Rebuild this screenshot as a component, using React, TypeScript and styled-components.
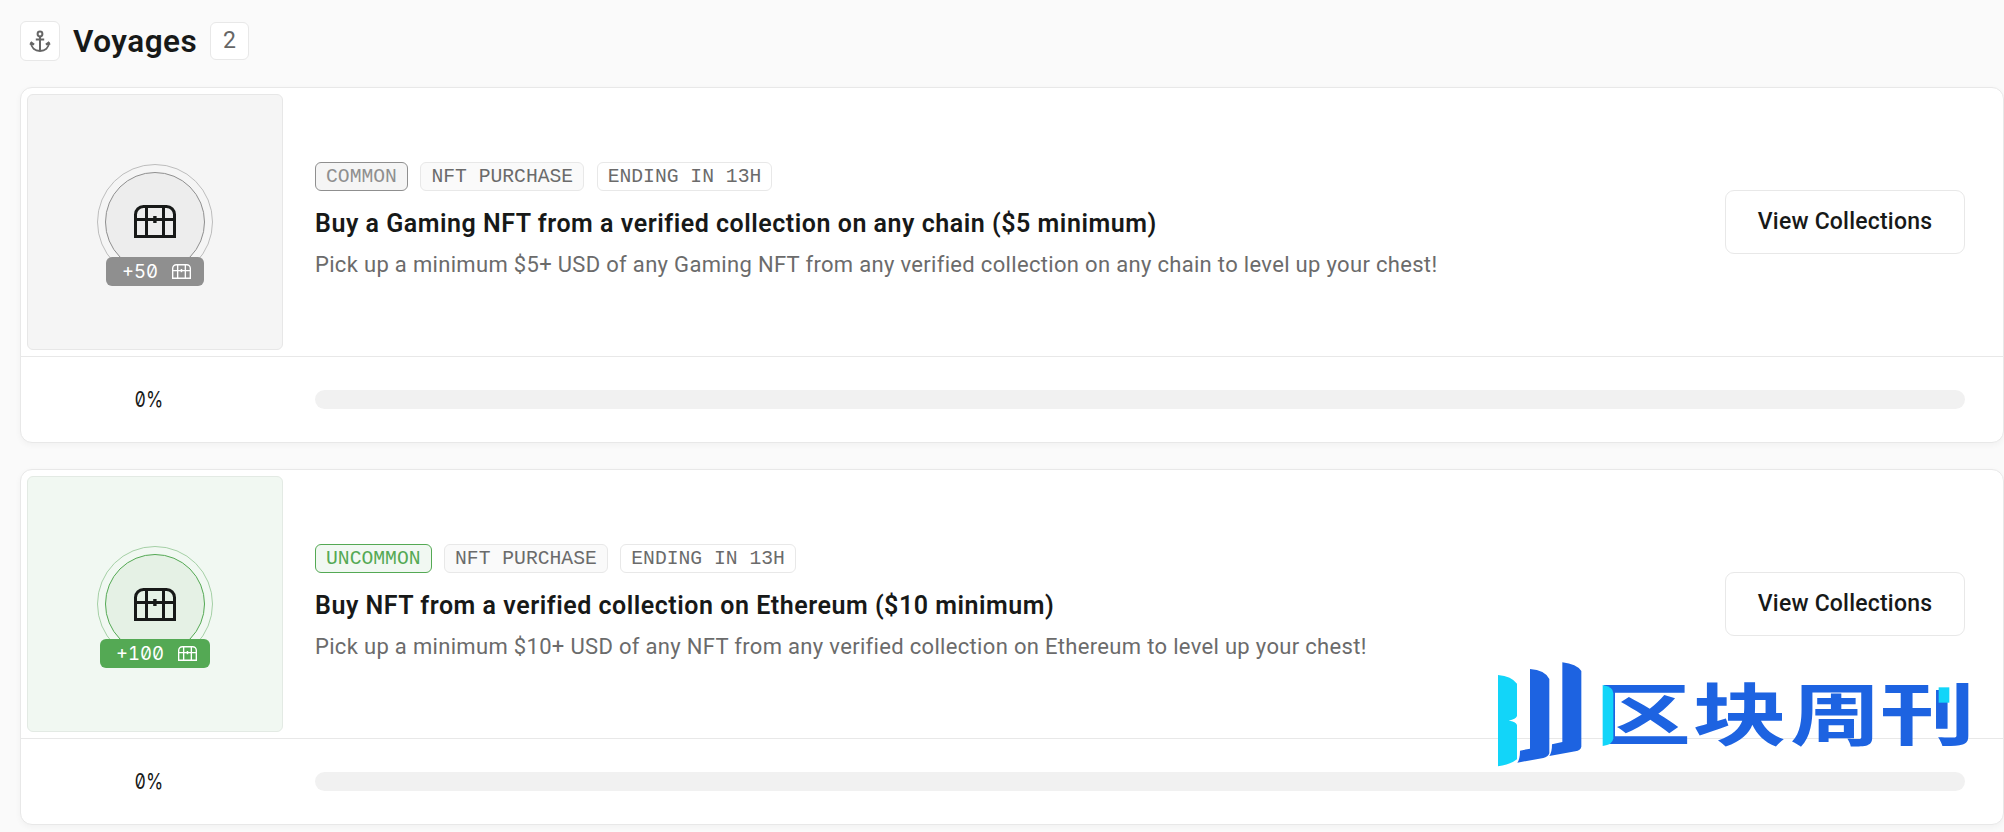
import styled, { createGlobalStyle } from 'styled-components'

type Rarity = 'common' | 'uncommon'

type Voyage = {
  rarity: Rarity
  reward: number
  title: string
  description: string
  progress: number
}

const voyages: Voyage[] = [
  {
    rarity: 'common',
    reward: 50,
    title: 'Buy a Gaming NFT from a verified collection on any chain ($5 minimum)',
    description: 'Pick up a minimum $5+ USD of any Gaming NFT from any verified collection on any chain to level up your chest!',
    progress: 0,
  },
  {
    rarity: 'uncommon',
    reward: 100,
    title: 'Buy NFT from a verified collection on Ethereum ($10 minimum)',
    description: 'Pick up a minimum $10+ USD of any NFT from any verified collection on Ethereum to level up your chest!',
    progress: 0,
  },
]

const colors = {
  common: { main: '#8f8f8f', soft: '#f5f5f5', disc: '#ededed', ring: '#bdbdbd' },
  uncommon: { main: '#54a954', soft: '#f1f8f2', disc: '#e5f1e5', ring: '#a5d0a6' },
}

const GlobalStyle = createGlobalStyle`
  * { box-sizing: border-box; }
  body {
    margin: 0;
    background: #fafafa;
    color: #171918;
    font-family: Roboto, "Liberation Sans", sans-serif;
    overflow: hidden;
  }
`

const Page = styled.main`
  position: relative;
  height: 832px;
  padding: 21px 0 0 20px;
  overflow: hidden;
`

const Header = styled.header`
  display: flex;
  align-items: center;
  height: 40px;
  margin-bottom: 26px;
`

const IconBox = styled.div`
  display: flex;
  align-items: center;
  justify-content: center;
  width: 40px;
  height: 40px;
  background: #fff;
  border: 1px solid #e8e8e8;
  border-radius: 6px;
`

const Heading = styled.h1`
  width: 124px;
  margin: 0 13px 0 13px;
  padding-top: 2px;
  font-size: 31.5px;
  font-weight: 600;
  line-height: 40px;
  letter-spacing: 0.5px;
  white-space: nowrap;
`

const Count = styled.div`
  width: 39px;
  height: 38px;
  background: #fff;
  border: 1px solid #e8e8e8;
  border-radius: 6px;
  color: #666;
  font-size: 23px;
  line-height: 35px;
  text-align: center;
`

const List = styled.div`
  display: flex;
  flex-direction: column;
  gap: 26px;
`

const Card = styled.article`
  height: 356px;
  background: #fff;
  border: 1px solid #e8e8e8;
  border-radius: 12px;
  box-shadow: 0 2px 6px rgba(0, 0, 0, 0.04);
`

const CardTop = styled.div`
  display: flex;
  align-items: center;
  height: 269px;
  padding: 6px 38px 6px 6px;
  border-bottom: 1px solid #e8e8e8;
`

const Cover = styled.div<{ $rarity: Rarity }>`
  display: flex;
  align-items: center;
  justify-content: center;
  flex: none;
  width: 256px;
  height: 256px;
  background: ${(p) => colors[p.$rarity].soft};
  border: 1px solid ${(p) => (p.$rarity === 'common' ? '#e7e7e7' : '#e3eae4')};
  border-radius: 6px;
`

const Ring = styled.div<{ $rarity: Rarity }>`
  position: relative;
  display: flex;
  align-items: center;
  justify-content: center;
  width: 116px;
  height: 116px;
  border: 1px solid ${(p) => colors[p.$rarity].ring};
  border-radius: 50%;
`

const Disc = styled.div<{ $rarity: Rarity }>`
  display: flex;
  align-items: center;
  justify-content: center;
  width: 100px;
  height: 100px;
  padding: ${(p) => (p.$rarity === 'common' ? '0 0 1px' : '1px 0 0')};
  background: ${(p) => colors[p.$rarity].disc};
  border: 1px solid ${(p) => colors[p.$rarity].main};
  border-radius: 50%;
`

const Reward = styled.div<{ $rarity: Rarity }>`
  position: absolute;
  top: 92px;
  left: 50%;
  display: flex;
  align-items: center;
  gap: 14px;
  height: 29px;
  padding: 0 13px 0 16px;
  transform: translateX(-50%);
  background: ${(p) => colors[p.$rarity].main};
  border-radius: 6px;
  color: #fff;
  font-family: Inter, "Liberation Mono", monospace;
  font-feature-settings: 'zero', 'tnum';
  font-size: 18.5px;
  line-height: 29px;
`

const Body = styled.div`
  flex: 1;
  min-width: 0;
  margin-left: 32px;
`

const Tags = styled.div`
  display: flex;
  gap: 12.5px;
  margin-bottom: 15px;
`

const Tag = styled.span<{ $fill?: string; $line?: string; $ink?: string }>`
  height: 29px;
  padding: 1px 10px 0;
  background: ${(p) => p.$fill || '#fff'};
  border: 1px solid ${(p) => p.$line || '#e8e8e8'};
  border-radius: 6px;
  color: ${(p) => p.$ink || '#6b6b6b'};
  font-family: "Liberation Mono", monospace;
  font-size: 19.7px;
  line-height: 27px;
  white-space: pre;
`

const Title = styled.h2`
  margin: 0 0 5px;
  font-size: 25px;
  font-weight: 600;
  line-height: 36px;
  letter-spacing: 0.53px;
  white-space: nowrap;
`

const Description = styled.p`
  margin: 0;
  color: #6b6b6b;
  font-size: 22px;
  line-height: 35px;
  letter-spacing: 0.32px;
  white-space: nowrap;
`

const Button = styled.button`
  width: 240px;
  height: 64px;
  padding: 0 0 1px;
  background: #fff;
  border: 1px solid #e8e8e8;
  border-radius: 9px;
  color: #171918;
  font-family: inherit;
  font-size: 23px;
  font-weight: 500;
  letter-spacing: 0.2px;
`

const ProgressRow = styled.div`
  display: flex;
  align-items: center;
  height: 85px;
  padding: 0 38px 0 6px;
`

const Percent = styled.div`
  width: 244px;
  margin-right: 44px;
  padding-bottom: 2px;
  font-family: Inter, "Liberation Mono", monospace;
  font-feature-settings: 'zero', 'tnum';
  font-size: 22px;
  text-align: center;
`

const Numerals = styled.span`
  display: inline-block;
  transform: scaleX(0.8);
`

const Track = styled.div`
  flex: 1;
  height: 19px;
  background: #f1f1f1;
  border-radius: 10px;
  overflow: hidden;
`

const Bar = styled.div`
  height: 100%;
  background: #54a954;
`

const Brand = styled.svg`
  position: absolute;
  top: 650px;
  left: 1490px;
`

const Anchor = () => (
  <svg width="22" height="23" viewBox="0 0 22 23" fill="none" stroke="#666" strokeWidth="2">
    <circle cx="11" cy="4" r="2.4" />
    <path d="M11 6.5V21M6.8 9.5h8.4M2 12.2C2.3 18 6 21 11 21s8.7-3 9-8.8M1.2 14.8l1.3-2.1 2.6 1.9M20.8 14.8l-1.3-2.1-2.6 1.9" />
  </svg>
)

const Chest = ({ width, height, stroke }: { width: number; height: number; stroke: number }) => (
  <svg width={width} height={height} viewBox="0 0 42 33" fill="none" stroke="currentColor" strokeWidth={stroke}>
    <path d="M1.5 31.5V9.5a8 8 0 0 1 8-8h23a8 8 0 0 1 8 8v22zM12.5 1.5v30M29.5 1.5v30M1.5 14.5h39" />
    <path d="M20.9 11v7" strokeWidth="3.4" />
  </svg>
)

const BrandLogo = () => (
  <Brand width="494" height="122" viewBox="30 60 1482 366">
    <g fill="#1d63e1">
      <path d="M150 117Q195 120 208 147V370Q204 381 190 384L112 398Q120 387 120 362L150 356Z" />
      <path d="M247 97Q290 102 304 123V350Q302 361 286 364L208 378Q216 367 216 343L247 336Z" />
      <g fontFamily='"Noto Sans CJK SC", sans-serif' fontWeight="700" fontSize="204">
        <text transform="translate(348 329) scale(1.4 1)">区</text>
        <text transform="translate(638 329) scale(1.38 1)">块</text>
        <text transform="translate(930 329) scale(1.34 1)">周</text>
        <text transform="translate(1200 329) scale(1.4 1)">刊</text>
      </g>
    </g>
    <g fill="#12d5f9">
      <path d="M54 135Q95 139 111 161V258Q108 268 86 272Q108 274 111 285V388Q95 402 54 409Z" />
      <path d="M368 165Q400 170 400 190V325Q398 345 368 348Z" />
      <path d="M1376 172h32v46h-32z" />
    </g>
  </Brand>
)

const VoyageCard = ({ rarity, reward, title, description, progress }: Voyage) => (
  <Card>
    <CardTop>
      <Cover $rarity={rarity}>
        <Ring $rarity={rarity}>
          <Disc $rarity={rarity}>
            <Chest width={42} height={33} stroke={3} />
          </Disc>
          <Reward $rarity={rarity}>
            +{reward}
            <Chest width={19} height={15} stroke={3} />
          </Reward>
        </Ring>
      </Cover>
      <Body>
        <Tags>
          <Tag $fill={colors[rarity].soft} $line={colors[rarity].main} $ink={colors[rarity].main}>
            {rarity.toUpperCase()}
          </Tag>
          <Tag $fill="#fafafa">NFT PURCHASE</Tag>
          <Tag>ENDING IN 13H</Tag>
        </Tags>
        <Title>{title}</Title>
        <Description>{description}</Description>
      </Body>
      <Button type="button">View Collections</Button>
    </CardTop>
    <ProgressRow>
      <Percent>
        <Numerals>{progress}%</Numerals>
      </Percent>
      <Track>
        <Bar style={{ width: `${progress}%` }} />
      </Track>
    </ProgressRow>
  </Card>
)

const App = () => {
  return (
    <>
      <GlobalStyle />
      <Page>
        <Header>
          <IconBox>
            <Anchor />
          </IconBox>
          <Heading>Voyages</Heading>
          <Count>{voyages.length}</Count>
        </Header>
        <List>
          {voyages.map((voyage) => (
            <VoyageCard key={voyage.rarity} {...voyage} />
          ))}
        </List>
        <BrandLogo />
      </Page>
    </>
  )
}

export default App
